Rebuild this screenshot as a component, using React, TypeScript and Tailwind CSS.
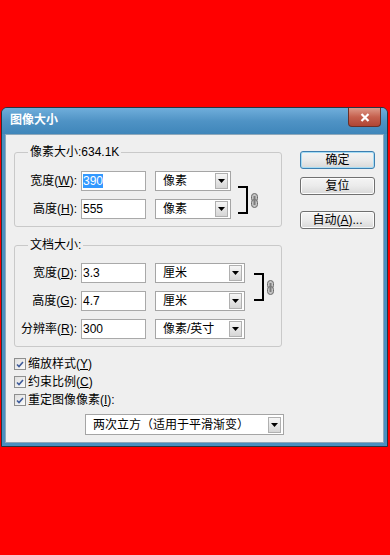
import React from 'react';

function DropButton() {
  return (
    <span className="flex h-[16px] w-[13px] items-center justify-center border border-[#b0b0b0] bg-linear-to-b from-[#f6f6f6] to-[#d6d6d6]">
      <svg width="7" height="4" viewBox="0 0 7 4">
        <path d="M0 0h7L3.5 4z" fill="#000" />
      </svg>
    </span>
  );
}

function Select({ value, className }: { value: string; className: string }) {
  return (
    <div className={`flex h-[20px] items-center justify-between border border-[#a5a5a5] bg-white pl-[7px] pr-[2px] ${className}`}>
      <span className="leading-[16px]">{value}</span>
      <DropButton />
    </div>
  );
}

function Field({ label, children }: { label: React.ReactNode; children: React.ReactNode }) {
  return (
    <div className="flex h-[20px] items-center">
      <span className="w-[62px] text-right leading-[16px]">{label}</span>
      <div className="ml-[4px] flex h-[20px] w-[65px] items-center border border-[#a9a9a9] bg-white pl-[1px]">
        {children}
      </div>
    </div>
  );
}

function ChainLink() {
  return (
    <svg width="7" height="15" viewBox="0 0 7 15">
      <rect x="0.5" y="0.5" width="6" height="8" rx="3" fill="#c4c4c4" stroke="#6a6a6a" />
      <rect x="0.5" y="6.5" width="6" height="8" rx="3" fill="#c4c4c4" stroke="#6a6a6a" />
      <rect x="2.5" y="3" width="2" height="9" fill="#7c7c7c" />
    </svg>
  );
}

function Check({ children }: { children: React.ReactNode }) {
  return (
    <label className="flex h-[18px] items-center">
      <span className="flex h-[12px] w-[12px] items-center justify-center border border-[#8e8f8f] bg-linear-to-br from-[#dedede] to-[#fbfbfb]">
        <svg width="8" height="7" viewBox="0 0 8 7">
          <path d="M1 3.5l2 2L7 1" stroke="#3d5a9a" strokeWidth="1.6" fill="none" />
        </svg>
      </span>
      <span className="ml-[2px] leading-[16px]">{children}</span>
    </label>
  );
}

function DialogButton({ children, primary = false, className = '' }: { children: React.ReactNode; primary?: boolean; className?: string }) {
  return (
    <button
      className={`flex h-[18px] w-[75px] items-center justify-center rounded-[3px] border bg-linear-to-b from-[#f4f4f4] via-[#ebebeb] to-[#d8d8d8] leading-[16px] ${
        primary ? 'border-[#3c7fb1] shadow-[inset_0_0_0_1px_#a6dcf4]' : 'border-[#707070] shadow-[inset_0_0_0_1px_#fcfcfc]'
      } ${className}`}
    >
      {children}
    </button>
  );
}

export default function App() {
  return (
    <div className="h-[555px] w-[390px] bg-[#ff0000] pt-[107px] text-[12px] text-black [font-family:'Liberation_Sans','Noto_Sans_CJK_SC',sans-serif]">
      <div className="ml-[1px] flex h-[340px] w-[387px] flex-col overflow-hidden rounded-t-[6px] border border-[#2b3440] bg-[#4a90c0]">
        {/* Title bar */}
        <div className="flex h-[26px] shrink-0 items-start justify-between bg-linear-to-b from-[#70aedb] via-[#4f93c5] to-[#3f86ba] pl-[8px] pr-[6px]">
          <span className="mt-[4px] font-bold leading-[16px] text-white">图像大小</span>
          <button className="flex h-[19px] w-[33px] items-center justify-center rounded-b-[4px] border border-t-0 border-[#6b2f28] bg-linear-to-b from-[#dd9a8a] via-[#c5604e] to-[#b04534]">
            <svg width="10" height="9" viewBox="0 0 10 9">
              <path d="M1.5 1l7 7M8.5 1l-7 7" stroke="#fff" strokeWidth="2.2" />
            </svg>
          </button>
        </div>

        {/* Body */}
        <div className="mx-[3px] mb-[3px] flex flex-1 border border-[#8ea8bb] bg-[#efefef] pl-[8px] pt-[9px]">
          <div className="flex w-[270px] flex-col">
            {/* 像素大小 */}
            <fieldset className="w-[268px] rounded-[3px] border border-[#c9c9c9] pb-[7px] pt-[11px]">
              <legend className="ml-[13px] px-[2px] leading-[16px]">像素大小:634.1K</legend>
              <div className="flex">
                <div className="flex flex-col gap-[8px]">
                  <div className="flex items-center">
                    <Field label={<>宽度(<u>W</u>):</>}>
                      <span className="bg-[#3399ff] leading-[14px] text-white">390</span>
                    </Field>
                    <Select value="像素" className="ml-[9px] w-[76px]" />
                  </div>
                  <div className="flex items-center">
                    <Field label={<>高度(<u>H</u>):</>}>
                      <span className="leading-[14px]">555</span>
                    </Field>
                    <Select value="像素" className="ml-[9px] w-[76px]" />
                  </div>
                </div>
                <div className="ml-[7px] mt-[10px] flex items-center">
                  <div className="h-[28px] w-[10px] border-y-2 border-r-2 border-black" />
                  <div className="ml-[3px]">
                    <ChainLink />
                  </div>
                </div>
              </div>
            </fieldset>

            {/* 文档大小 */}
            <fieldset className="mt-[10px] w-[268px] rounded-[3px] border border-[#c9c9c9] pb-[7px] pt-[10px]">
              <legend className="ml-[13px] px-[2px] leading-[16px]">文档大小:</legend>
              <div className="flex">
                <div className="flex flex-col gap-[8px]">
                  <div className="flex items-center">
                    <Field label={<>宽度(<u>D</u>):</>}>
                      <span className="leading-[14px]">3.3</span>
                    </Field>
                    <Select value="厘米" className="ml-[9px] w-[90px]" />
                  </div>
                  <div className="flex items-center">
                    <Field label={<>高度(<u>G</u>):</>}>
                      <span className="leading-[14px]">4.7</span>
                    </Field>
                    <Select value="厘米" className="ml-[9px] w-[90px]" />
                  </div>
                  <div className="flex items-center">
                    <Field label={<span className="-ml-[4px] whitespace-nowrap">分辨率(<u>R</u>):</span>}>
                      <span className="leading-[14px]">300</span>
                    </Field>
                    <Select value="像素/英寸" className="ml-[9px] w-[90px]" />
                  </div>
                </div>
                <div className="ml-[9px] mt-[10px] flex items-center self-start">
                  <div className="h-[28px] w-[10px] border-y-2 border-r-2 border-black" />
                  <div className="ml-[3px]">
                    <ChainLink />
                  </div>
                </div>
              </div>
            </fieldset>

            {/* Options */}
            <div className="mt-[8px] flex flex-col">
              <Check>缩放样式(<u>Y</u>)</Check>
              <Check>约束比例(<u>C</u>)</Check>
              <Check>重定图像像素(<u>I</u>):</Check>
            </div>
            <Select value="两次立方（适用于平滑渐变）" className="ml-[71px] mt-[5px] h-[21px] w-[199px]" />
          </div>

          {/* Buttons */}
          <div className="ml-[16px] mt-[7px] flex flex-col">
            <DialogButton primary>确定</DialogButton>
            <DialogButton className="mt-[8px]">复位</DialogButton>
            <DialogButton className="mt-[16px]">
              自动(<u>A</u>)...
            </DialogButton>
          </div>
        </div>
      </div>
    </div>
  );
}
